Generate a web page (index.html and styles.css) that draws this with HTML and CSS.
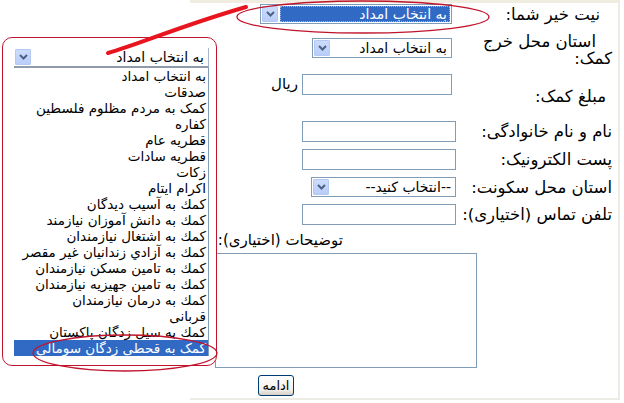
FILE: index.html
```html
<!DOCTYPE html>
<html lang="fa">
<head>
    <meta charset="UTF-8">
    <meta name="viewport" content="width=device-width, initial-scale=1.0">
    <title>فرم کمک امداد</title>
    <link rel="stylesheet" href="styles.css">
</head>
<body>
    <div class="page">
        <form class="form" dir="rtl">
            <div class="row row-intent">
                <div class="label label-intent">نیت خیر شما:</div>
                <div class="field field-short">
                    <div class="combo combo-focus combo-intent">
                        <span class="combo-text">به انتخاب امداد</span>
                        <span class="combo-btn"><svg width="9" height="6" viewBox="0 0 9 6"><path d="M1 1 L4.5 4.5 L8 1" fill="none" stroke="#4d6185" stroke-width="2"/></svg></span>
                    </div>
                </div>
            </div>
            <div class="row row-city">
                <div class="label label-city"><span class="pad">استان محل خرج</span><br>کمک:</div>
                <div class="field field-short">
                    <div class="combo combo-city">
                        <span class="combo-text">به انتخاب امداد</span>
                        <span class="combo-btn"><svg width="9" height="6" viewBox="0 0 9 6"><path d="M1 1 L4.5 4.5 L8 1" fill="none" stroke="#4d6185" stroke-width="2"/></svg></span>
                    </div>
                </div>
            </div>
            <div class="row row-amount">
                <div class="label label-amount">مبلغ کمک:</div>
                <div class="field field-short field-amount">
                    <input class="text-input input-amount" type="text">
                    <span class="unit">ریال</span>
                </div>
            </div>
            <div class="row">
                <div class="label">نام و نام خانوادگی:</div>
                <div class="field"><input class="text-input" type="text"></div>
            </div>
            <div class="row">
                <div class="label">پست الکترونیک:</div>
                <div class="field"><input class="text-input" type="text"></div>
            </div>
            <div class="row">
                <div class="label">استان محل سکونت:</div>
                <div class="field">
                    <div class="combo combo-province">
                        <span class="combo-text">--انتخاب کنید--</span>
                        <span class="combo-btn"><svg width="9" height="6" viewBox="0 0 9 6"><path d="M1 1 L4.5 4.5 L8 1" fill="none" stroke="#4d6185" stroke-width="2"/></svg></span>
                    </div>
                </div>
            </div>
            <div class="row row-phone">
                <div class="label">تلفن تماس (اختیاری):</div>
                <div class="field"><input class="text-input" type="text"></div>
            </div>
            <div class="notes">
                <div class="notes-label">توضیحات (اختیاری):</div>
                <textarea class="notes-box"></textarea>
                <button class="submit-button" type="button">ادامه</button>
            </div>
        </form>
    </div>

    <!-- pasted screenshot of the opened list -->
    <div class="shot">
        <div class="shot-combo" dir="rtl">
            <span class="shot-combo-text">به انتخاب امداد</span>
            <span class="combo-btn"><svg width="9" height="6" viewBox="0 0 9 6"><path d="M1 1 L4.5 4.5 L8 1" fill="none" stroke="#4d6185" stroke-width="2"/></svg></span>
        </div>
        <ul class="shot-list" dir="rtl">
            <li>به انتخاب امداد</li>
            <li>صدقات</li>
            <li>کمک به مردم مظلوم فلسطین</li>
            <li>کفاره</li>
            <li>قطریه عام</li>
            <li>قطریه سادات</li>
            <li>زکات</li>
            <li>اکرام ایتام</li>
            <li>کمك به آسیب دیدگان</li>
            <li>کمك به دانش آموزان نیازمند</li>
            <li>کمك به اشتغال نیازمندان</li>
            <li>کمك به آزادي زندانیان غیر مقصر</li>
            <li>کمك به تامین مسکن نیازمندان</li>
            <li>کمك به تامین جهیزیه نیازمندان</li>
            <li>کمك به درمان نیازمندان</li>
            <li>قربانی</li>
            <li>کمك به سیل زدگان پاکستان</li>
            <li class="selected">کمک به قحطی زدگان سومالی</li>
        </ul>
    </div>

    <!-- red marks drawn over the picture -->
    <svg class="marks" width="624" height="403" viewBox="0 0 624 403">
        <path d="M108 53 C 140 44, 180 26, 246 7" fill="none" stroke="#e8141e" stroke-width="4" stroke-linecap="round"/>
        <ellipse cx="363" cy="17" rx="126" ry="16" fill="none" stroke="#c0142c" stroke-width="1.3"/>
        <ellipse cx="125" cy="353" rx="92" ry="18" fill="none" stroke="#c0142c" stroke-width="1.3"/>
    </svg>
</body>
</html>
```

FILE: styles.css
```css
body {
    margin: 0;
    font-family: "DejaVu Sans", sans-serif;
    background: #fff;
    color: #000;
}
.page {
    margin-left: 190px;
    width: 426px;
    height: 395px;
    padding-right: 2px;
    border-top: 3px solid #f0ece0;
    border-right: 2px solid #ecebe4;
    border-bottom: 2px solid #ecebe4;
}
.row {
    display: flex;
    align-items: center;
    height: 28px;
}
.row-intent {
    height: 22px;
}
.row-city {
    height: 46px;
}
.row-amount {
    height: 46px;
}
.row-phone {
    height: 27px;
}
.label {
    width: 146px;
    padding-right: 4px;
    font-size: 16.5px;
    line-height: 17px;
    white-space: nowrap;
}
.label-intent {
    padding-right: 16px;
    width: 134px;
}
.label-city {
    padding-top: 4px;
}
.label-city .pad {
    padding-right: 16px;
}
.label-amount {
    padding-right: 10px;
    width: 140px;
    padding-top: 4px;
}
.field {
    margin-right: 10px;
    display: flex;
    align-items: center;
}
.field-short {
    margin-right: 14px;
}
.field-amount {
    margin-bottom: 20px;
}
.unit {
    font-size: 15px;
    margin-right: 4px;
}
.text-input {
    box-sizing: border-box;
    width: 154px;
    height: 21px;
    margin: 0;
    border: 1px solid #7f9db9;
    padding: 1px 2px;
    font: 13px "DejaVu Sans", sans-serif;
}
.input-amount {
    width: 150px;
}

/* windows xp style select */
.combo {
    box-sizing: border-box;
    height: 20px;
    border: 1px solid #7f9db9;
    display: flex;
    align-items: center;
    padding: 1px;
    font-size: 14px;
    background: #fff;
}
.combo-text {
    flex: 1;
    padding-right: 3px;
    line-height: 16px;
    white-space: nowrap;
}
.combo-btn {
    box-sizing: border-box;
    width: 16px;
    height: 16px;
    display: flex;
    align-items: center;
    justify-content: center;
    background: linear-gradient(#cddcfc, #b8cdf8);
    border: 1px solid #b4c8f4;
    border-radius: 1px;
}
.combo-intent {
    width: 192px;
}
.combo-focus .combo-text {
    background: #316ac5;
    color: #fff;
    outline: 1px dotted #9db4e0;
    outline-offset: -1px;
    margin-left: 2px;
}
.combo-city {
    width: 140px;
}
.combo-province {
    width: 145px;
}

.notes {
    display: flex;
    flex-direction: column;
    align-items: flex-start;
}
.notes-label {
    margin-top: 2px;
    margin-right: 273px;
    font-size: 15px;
    line-height: 20px;
    white-space: nowrap;
}
.notes-box {
    box-sizing: border-box;
    width: 262px;
    height: 115px;
    margin: 3px 139px 0 0;
    border: 1px solid #7f9db9;
    resize: none;
}
.submit-button {
    box-sizing: border-box;
    width: 36px;
    height: 21px;
    margin: 7px 322px 0 0;
    padding: 0;
    border: 1px solid #003c74;
    border-radius: 3px;
    background: linear-gradient(#fefefe, #f2f1ec 70%, #d6d0c5);
    font: 13px "DejaVu Sans", sans-serif;
    color: #000;
}

/* pasted list picture */
.shot {
    position: absolute;
    left: 2px;
    top: 37px;
    box-sizing: border-box;
    width: 215px;
    height: 329px;
    padding: 10px 0 0 11px;
    border: 1.5px solid #c0142c;
    border-radius: 10px;
    background: #fff;
}
.shot-combo {
    box-sizing: border-box;
    width: 195px;
    height: 20px;
    display: flex;
    align-items: center;
    padding: 1px;
    border-right: 1px solid #a8b8cc;
    border-bottom: 2px solid #8e9bab;
    font-size: 14px;
}
.shot-combo-text {
    flex: 1;
    padding-right: 3px;
}
.shot-list {
    box-sizing: border-box;
    width: 195px;
    margin: 0;
    padding: 0;
    list-style: none;
    border-right: 1px solid #7f9db9;
    font-size: 13.5px;
}
.shot-list li {
    height: 16px;
    line-height: 16px;
    padding-right: 2px;
    white-space: nowrap;
}
.shot-list .selected {
    background: #316ac5;
    color: #fff;
}
.marks {
    position: absolute;
    left: 0;
    top: 0;
    pointer-events: none;
}
```
